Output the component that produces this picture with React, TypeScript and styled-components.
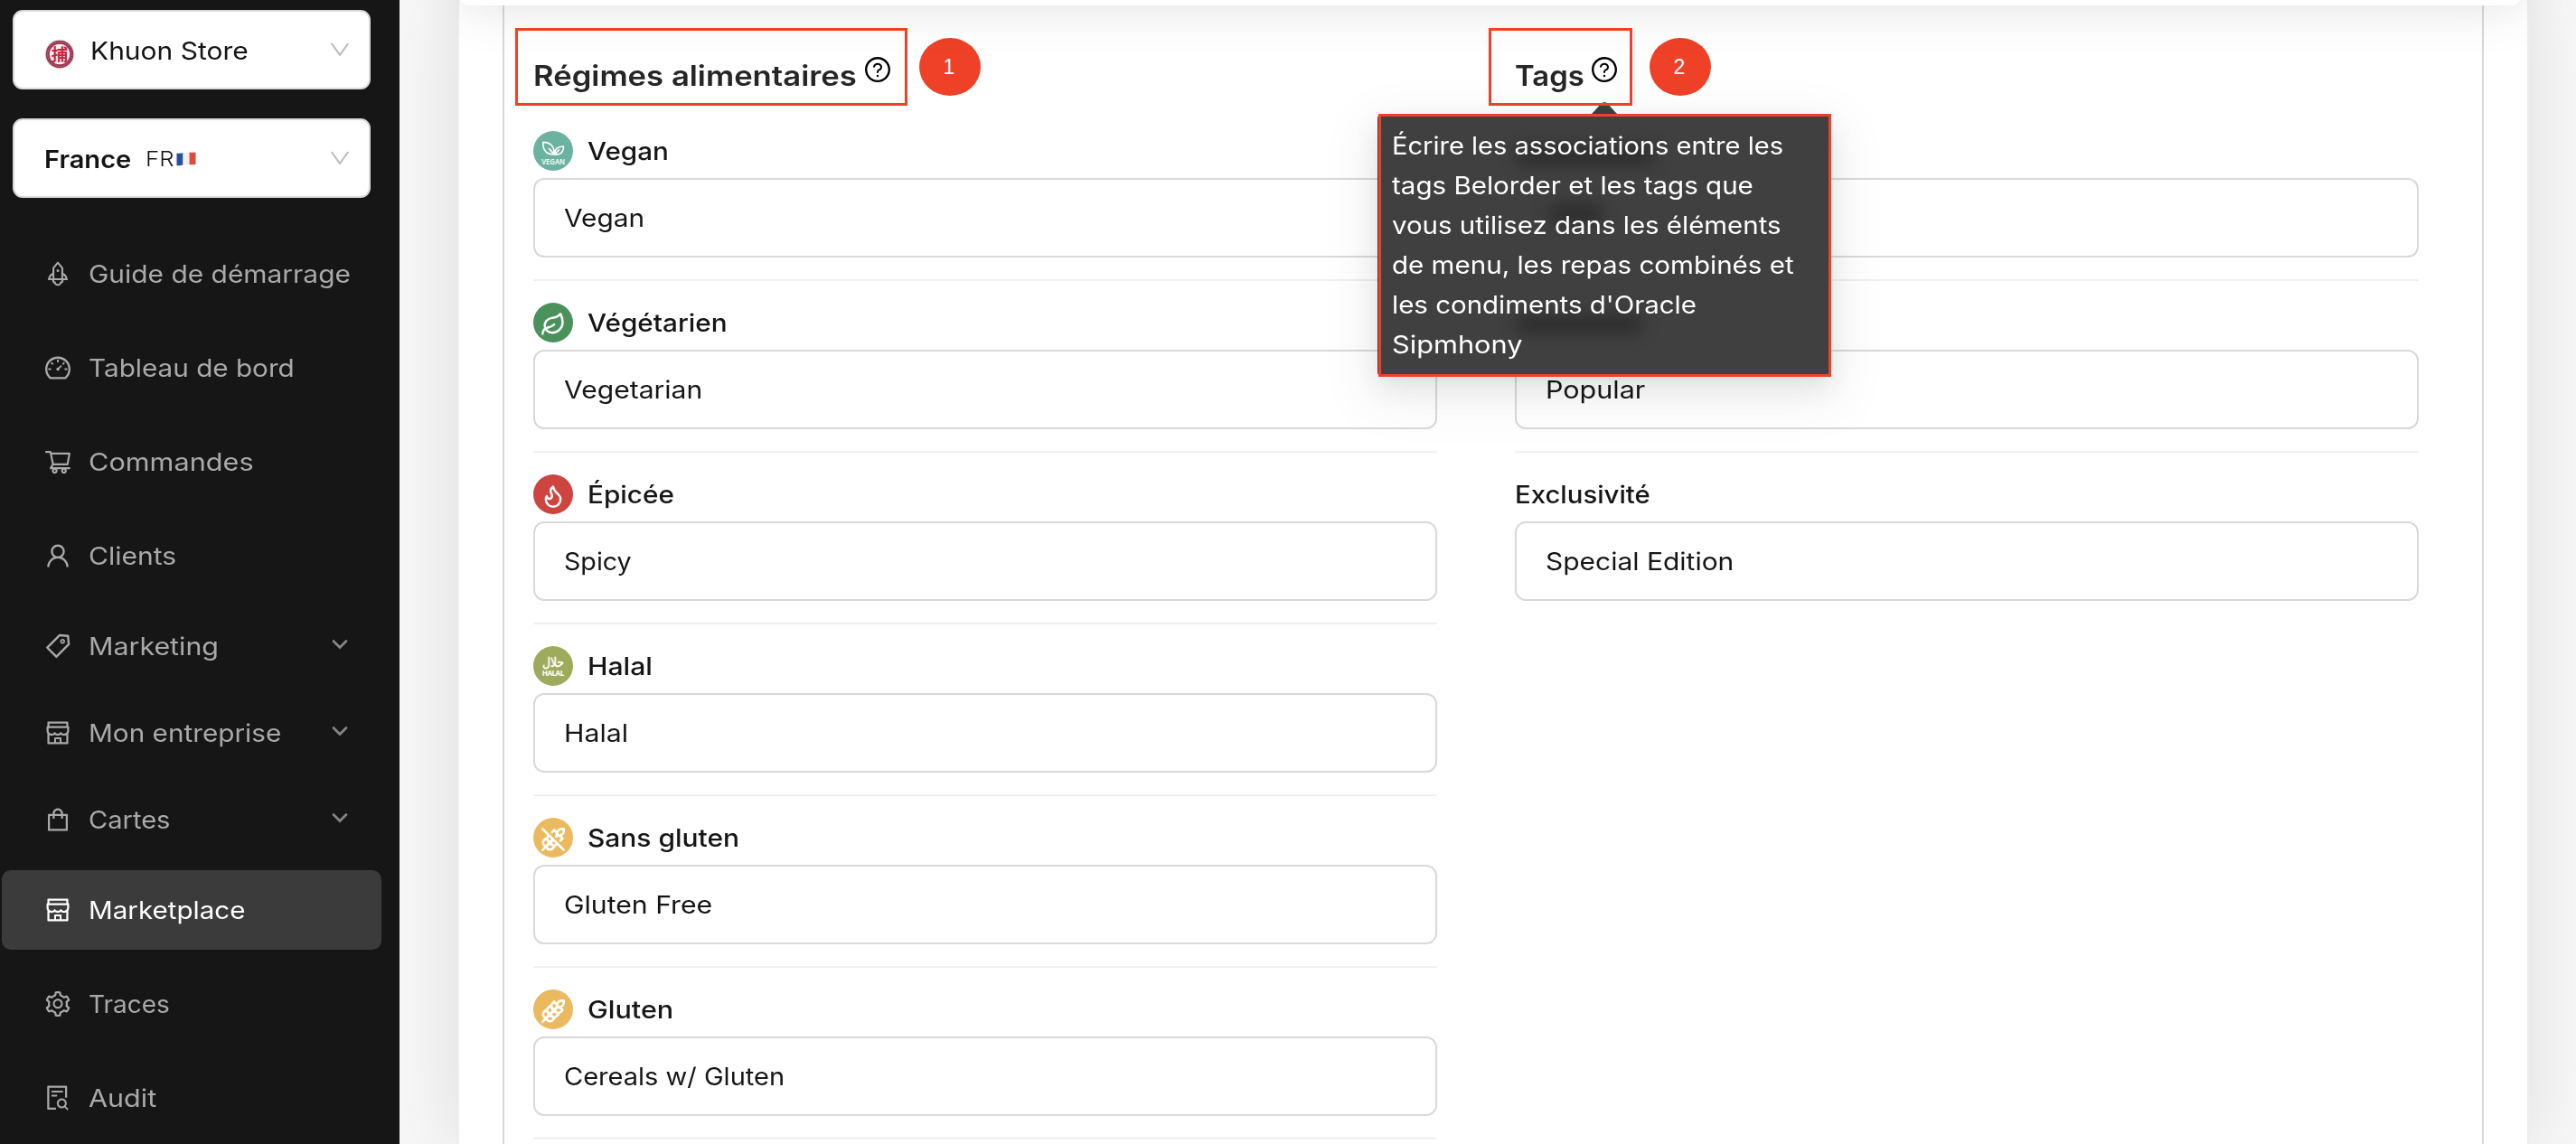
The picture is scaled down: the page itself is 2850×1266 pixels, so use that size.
import React from "react";
import styled, { createGlobalStyle } from "styled-components";
import { Leaf, Wheat, WheatOff } from "lucide-react";
import {
  AiOutlineDashboard,
  AiOutlineDown,
  AiOutlineFileSearch,
  AiOutlineQuestionCircle,
  AiOutlineRocket,
  AiOutlineSetting,
  AiOutlineShop,
  AiOutlineShopping,
  AiOutlineShoppingCart,
  AiOutlineTag,
  AiOutlineUser,
} from "react-icons/ai";

const RED = "#ee4127";

const GlobalStyle = createGlobalStyle`
  * { box-sizing: border-box; }
  body {
    margin: 0;
    background: #f7f7f7;
    color: #161616;
    font-family: Inter, "Liberation Sans", sans-serif;
    font-size: 27px;
  }
`;

const Shell = styled.div`
  display: flex;
  height: 1266px;
  overflow: hidden;
`;

const Label = styled.span<{ $stretch: number; $weight?: number; $width?: number }>`
  display: inline-block;
  flex: none;
  width: ${(p) => (p.$width ? `${p.$width}px` : "auto")};
  font-weight: ${(p) => p.$weight ?? 400};
  white-space: nowrap;
  transform: scaleX(${(p) => p.$stretch});
  transform-origin: left center;
`;

/* ---------- sidebar ---------- */

const Sidebar = styled.nav`
  position: relative;
  z-index: 2;
  flex: none;
  width: 442px;
  padding-top: 11px;
  background: #161616;
`;

const Selects = styled.div`
  display: flex;
  flex-direction: column;
  gap: 32px;
  padding: 0 32px 32px 14px;
`;

const Select = styled.div`
  display: flex;
  align-items: center;
  height: 88px;
  padding: 0 18px 0 33px;
  border: 2px solid #d9d9d9;
  border-radius: 11px;
  background: #fff;
  color: #141414;

  ${Label} { margin-top: 2px; }

  > svg:last-child {
    margin-left: auto;
    color: #bfbfbf;
  }
`;

const StoreLogo = styled.svg`
  width: 34px;
  height: 34px;
  margin: 10px 17px 0 0;
`;

const Flag = styled.svg`
  width: 22px;
  height: 16px;
  margin-top: 2px;
`;

const CountryCode = styled(Label)`
  font-size: 23px;
`;

const Menu = styled.div`
  display: flex;
  flex-direction: column;
`;

const MenuItem = styled.div<{ $group?: boolean; $active?: boolean }>`
  display: flex;
  align-items: center;
  gap: 18px;
  height: ${(p) => (p.$group ? 80 : 88)}px;
  margin: 8px 20px 8px 2px;
  padding: 0 36px 0 46px;
  border-radius: 10px;
  background: ${(p) => (p.$active ? "#3b3b3b" : "transparent")};
  color: ${(p) => (p.$active ? "#fff" : "#a9a9a9")};

  > svg { flex: none; }
`;

const Chevron = styled.svg`
  width: 20px;
  height: 14px;
  margin: -4px 0 0 auto;
`;

/* ---------- main area ---------- */

const Main = styled.main`
  flex: 1;
  display: flex;
  padding: 0 52px 0 64px;
`;

const Card = styled.section`
  position: relative;
  flex: 1;
  padding: 0 48px;
  border: solid #eeeeee;
  border-width: 0 2px;
  background: #fff;
  box-shadow: 0 0 80px rgba(0, 0, 0, 0.11);
`;

const HeaderEdge = styled.div`
  position: absolute;
  top: -114px;
  left: 0;
  right: 6px;
  height: 120px;
  border-radius: 12px;
  background: #fff;
  box-shadow: 0 0 60px rgba(0, 0, 0, 0.125);
  pointer-events: none;
`;

const Frame = styled.div`
  display: grid;
  grid-template-columns: 1000px 1000px;
  column-gap: 86px;
  height: 100%;
  padding-left: 32px;
  border: solid #d9d9d9;
  border-width: 0 2px;
`;

const Column = styled.div`
  display: flex;
  flex-direction: column;
`;

const Heading = styled.h2`
  position: relative;
  display: flex;
  align-items: center;
  height: 145px;
  margin: 0;
  padding-top: 22px;
  color: #262626;
  font-size: 31px;
  font-weight: 600;
`;

const HelpIcon = styled(AiOutlineQuestionCircle)`
  flex: none;
  width: 32px;
  height: 32px;
  margin: -13px 0 0 4px;
  color: #000;
`;

const Field = styled.div`
  flex: none;
  height: 190px;
`;

const FieldLabel = styled.div`
  display: flex;
  align-items: center;
  gap: 16px;
  height: 44px;
  margin-bottom: 8px;
`;

const Input = styled.div`
  display: flex;
  align-items: center;
  height: 88px;
  padding-left: 32px;
  border: 2px solid #d9d9d9;
  border-radius: 12px;
`;

const Divider = styled.div`
  height: 2px;
  margin-top: 24px;
  background: #f0f0f0;
`;

const Disc = styled.span<{ $color: string }>`
  display: flex;
  align-items: center;
  justify-content: center;
  width: 44px;
  height: 44px;
  border-radius: 50%;
  background: ${(p) => p.$color};
  color: #fff;

  > svg:not([viewBox="0 0 44 44"]) { margin-top: 4px; }
`;

/* ---------- annotations ---------- */

const Outline = styled.div<{ $left: number; $width: number }>`
  position: absolute;
  z-index: 3;
  top: 31px;
  left: ${(p) => p.$left}px;
  width: ${(p) => p.$width}px;
  height: 86px;
  border: 3px solid ${RED};
`;

const Badge = styled.div<{ $left: number }>`
  position: absolute;
  top: 42px;
  left: ${(p) => p.$left}px;
  display: flex;
  align-items: center;
  justify-content: center;
  width: 68px;
  height: 64px;
  padding: 1px 2px 0 0;
  border-radius: 50%;
  background: ${RED};
  color: #fff;
  font: 400 23px "Liberation Sans", Arial, sans-serif;
`;

const Tooltip = styled.div`
  position: absolute;
  z-index: 2;
  top: 127px;
  left: -152px;
  width: 501px;
  height: 289px;
  padding: 13px 16px;
  border-radius: 4px;
  background: #404040;
  box-shadow: 0 12px 32px rgba(0, 0, 0, 0.08), 0 6px 12px -8px rgba(0, 0, 0, 0.12),
    0 18px 56px 16px rgba(0, 0, 0, 0.05);
  color: #fff;
  font-size: 27px;
  font-weight: 400;
`;

const Smudge = styled.span<{ $top: number; $left: number; $width: number }>`
  position: absolute;
  top: ${(p) => p.$top}px;
  left: ${(p) => p.$left}px;
  width: ${(p) => p.$width}px;
  height: 18px;
  background: rgba(0, 0, 0, 0.33);
  filter: blur(9px);
`;

const TooltipFrame = styled.div`
  position: absolute;
  z-index: 3;
  top: 126px;
  left: -151px;
  width: 501px;
  height: 291px;
  border: 3px solid ${RED};
`;

const TooltipArrow = styled.svg`
  position: absolute;
  z-index: 2;
  top: 112px;
  left: 81px;
  width: 36px;
  height: 16px;
`;

const TooltipLine = styled.div`
  position: relative;
  height: 44px;
  line-height: 44px;
`;

/* ---------- drawings ---------- */

const VeganIcon = () => (
  <svg width="44" height="44" viewBox="0 0 44 44" fill="none" stroke="#fff" strokeWidth="1.6" strokeLinecap="round" strokeLinejoin="round">
    <path d="M23 25.6C15 26.4 10.4 21.6 10.8 12.4c7.4 0 12.8 4 12.2 13.2z" />
    <path d="M23.6 25.6c-.4-5.200 3.200-8.600 9.800-8.600.4 6.200-3.600 9.800-9.800 8.600z" />
    <path d="M17.6 19.6l5.400 6M28.600 20.800l-4.800 4.800" />
    <text x="22.2" y="36.5" fill="#fff" stroke="none" fontSize="8.8" fontWeight="600" textAnchor="middle" fontFamily="Noto Sans, sans-serif" textLength="26" lengthAdjust="spacingAndGlyphs">VEGAN</text>
  </svg>
);

const HalalIcon = () => (
  <svg width="44" height="44" viewBox="0 0 44 44" fill="#fff">
    <text x="22" y="23" fontSize="14" stroke="#fff" strokeWidth=".5" textAnchor="middle" fontFamily="DejaVu Sans, sans-serif" textLength="24" lengthAdjust="spacingAndGlyphs">حلال</text>
    <text x="22" y="33.2" fontSize="8.2" fontWeight="700" textAnchor="middle" fontFamily="Noto Sans, sans-serif" textLength="24.500">HALAL</text>
  </svg>
);

const FlameIcon = () => (
  <svg width="28" height="28" viewBox="0 0 24 24" fill="none" stroke="#fff" strokeWidth="2.1" strokeLinecap="round" strokeLinejoin="round">
    <path d="M8.5 14.5A2.5 2.5 0 0 0 11 12c0-1.38-.5-2-1-3-1.072-2.143-.224-4.054 2-6 .5 2.5 2 4.9 4 6.5 2 1.6 3 3.5 3 5.5a7 7 0 1 1-14 0c0-1.153.433-2.294 1-3a2.5 2.5 0 0 0 2.5 2.5z" />
  </svg>
);

const ExpandIcon = () => (
  <Chevron viewBox="0 0 20 14" fill="none" stroke="#858585" strokeWidth="2.8" strokeLinecap="round">
    <path d="M3 3.6l7 7 7-7" />
  </Chevron>
);

/* ---------- data ---------- */

const menu = [
  { text: "Guide de démarrage", stretch: 1.108, Icon: AiOutlineRocket },
  { text: "Tableau de bord", stretch: 1.099, Icon: AiOutlineDashboard },
  { text: "Commandes", stretch: 1.135, Icon: AiOutlineShoppingCart },
  { text: "Clients", stretch: 1.113, Icon: AiOutlineUser },
  { text: "Marketing", stretch: 1.125, Icon: AiOutlineTag, group: true },
  { text: "Mon entreprise", stretch: 1.101, Icon: AiOutlineShop, group: true },
  { text: "Cartes", stretch: 1.076, Icon: AiOutlineShopping, group: true },
  { text: "Marketplace", stretch: 1.096, Icon: AiOutlineShop, active: true },
  { text: "Traces", stretch: 1.036, Icon: AiOutlineSetting },
  { text: "Audit", stretch: 1.13, Icon: AiOutlineFileSearch },
];

type FieldData = {
  label?: string;
  labelStretch?: number;
  value?: string;
  stretch?: number;
  color?: string;
  icon?: React.ReactNode;
};

const diets: FieldData[] = [
  { label: "Vegan", labelStretch: 1.098, value: "Vegan", stretch: 1.104, color: "#6bb3a0", icon: <VeganIcon /> },
  { label: "Végétarien", labelStretch: 1.101, value: "Vegetarian", stretch: 1.113, color: "#4a915b", icon: <Leaf size={28} strokeWidth={2.1} /> },
  { label: "Épicée", labelStretch: 1.101, value: "Spicy", stretch: 1.06, color: "#ce4540", icon: <FlameIcon /> },
  { label: "Halal", labelStretch: 1.117, value: "Halal", stretch: 1.118, color: "#9fab5c", icon: <HalalIcon /> },
  { label: "Sans gluten", labelStretch: 1.109, value: "Gluten Free", stretch: 1.118, color: "#ecba5e", icon: <WheatOff size={28} strokeWidth={2.3} /> },
  { label: "Gluten", labelStretch: 1.13, value: "Cereals w/ Gluten", stretch: 1.075, color: "#ecba5e", icon: <Wheat size={28} strokeWidth={2.3} /> },
];

const tags: FieldData[] = [
  {},
  { value: "Popular", stretch: 1.13 },
  { label: "Exclusivité", labelStretch: 1.087, value: "Special Edition", stretch: 1.11 },
];

const tooltipLines: [string, number][] = [
  ["Écrire les associations entre les", 1.076],
  ["tags Belorder et les tags que", 1.094],
  ["vous utilisez dans les éléments", 1.09],
  ["de menu, les repas combinés et", 1.094],
  ["les condiments d'Oracle", 1.091],
  ["Sipmhony", 1.138],
];

const FieldRow = ({ data, divider }: { data: FieldData; divider: boolean }) => (
  <Field>
    <FieldLabel>
      {data.icon && <Disc $color={data.color!}>{data.icon}</Disc>}
      {data.label && <Label $stretch={data.labelStretch ?? 1} $weight={500}>{data.label}</Label>}
    </FieldLabel>
    <Input>
      {data.value && <Label $stretch={data.stretch ?? 1}>{data.value}</Label>}
    </Input>
    {divider && <Divider />}
  </Field>
);

export default function App() {
  return (
    <Shell>
      <GlobalStyle />
      <Sidebar>
        <Selects>
          <Select>
            <StoreLogo viewBox="0 0 34 34">
              <circle cx="17" cy="17" r="16.5" fill="#e6e3e4" />
              <circle cx="17" cy="17" r="15.3" fill="#98364f" />
              <circle cx="17" cy="17" r="13.4" fill="none" stroke="#c07f90" strokeWidth="1" strokeDasharray="1.5 1.5" />
              <circle cx="17" cy="17" r="11.2" fill="#f8f0f2" />
              <text x="17" y="23.6" textAnchor="middle" fontSize="18.5" fontWeight="700" fill="#cf1f3c" fontFamily="Noto Sans CJK TC, Noto Sans CJK SC, sans-serif">捕</text>
            </StoreLogo>
            <Label $stretch={1.11}>Khuon Store</Label>
            <AiOutlineDown size={28} />
          </Select>
          <Select>
            <Label $stretch={1.076} $weight={600} $width={112}>France</Label>
            <CountryCode $stretch={1.12} $weight={300} $width={34}>FR</CountryCode>
            <Flag viewBox="0 0 22 16">
              <path d="M.5 1.5Q4 2 7.5 1.2V14.6Q4 15.6 .5 15z" fill="#2a4f9c" />
              <path d="M7.5 1.2Q11 .2 14.5 .6V14Q11 13.8 7.5 14.6z" fill="#f1f1f1" />
              <path d="M14.5 .6Q18 1.1 21.5 .5V13.9Q18 14.6 14.5 14z" fill="#dc4c3f" />
            </Flag>
            <AiOutlineDown size={28} />
          </Select>
        </Selects>
        <Menu>
          {menu.map(({ text, stretch, Icon, group, active }) => (
            <MenuItem key={text} $group={group} $active={active}>
              <Icon size={32} />
              <Label $stretch={stretch}>{text}</Label>
              {group && <ExpandIcon />}
            </MenuItem>
          ))}
        </Menu>
      </Sidebar>

      <Main>
        <Card>
          <Frame>
            <Column>
              <Heading>
                <Label $stretch={1.118} $weight={600} $width={361}>Régimes alimentaires</Label>
                <HelpIcon />
                <Outline $left={-20} $width={434} />
                <Badge $left={427}>1</Badge>
              </Heading>
              {diets.map((d) => (
                <FieldRow key={d.label} data={d} divider />
              ))}
            </Column>
            <Column>
              <Heading>
                <Label $stretch={1.06} $weight={600} $width={79}>Tags</Label>
                <HelpIcon />
                <Outline $left={-29} $width={159} />
                <Badge $left={149}>2</Badge>
                <TooltipArrow viewBox="0 0 36 16">
                  <path d="M0 16C3 15 4 14 6 12L14.5 2.6Q18 -.8 21.5 2.6L30 12C32 14 33 15 36 16z" fill="#404040" />
                </TooltipArrow>
                <Tooltip>
                  <Smudge $top={36} $left={154} $width={152} />
                  <Smudge $top={100} $left={190} $width={58} />
                  <Smudge $top={223} $left={154} $width={138} />
                  {tooltipLines.map(([line, stretch]) => (
                    <TooltipLine key={line}>
                      <Label $stretch={stretch}>{line}</Label>
                    </TooltipLine>
                  ))}
                </Tooltip>
                <TooltipFrame />
              </Heading>
              {tags.map((t, i) => (
                <FieldRow key={i} data={t} divider={i < tags.length - 1} />
              ))}
            </Column>
          </Frame>
          <HeaderEdge />
        </Card>
      </Main>
    </Shell>
  );
}
